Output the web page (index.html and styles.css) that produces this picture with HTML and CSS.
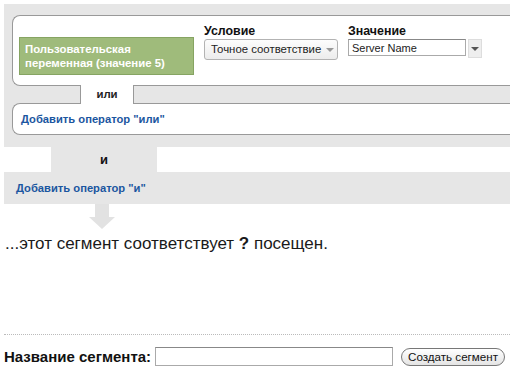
FILE: index.html
```html
<!DOCTYPE html>
<html>
<head>
<meta charset="utf-8">
<link rel="stylesheet" href="styles.css">
</head>
<body>

<div class="segment">
  <div class="or-group">
    <div class="box rule">
      <div class="dimension">Пользовательская переменная (значение 5)</div>
      <div class="field cond">
        <div class="field-label">Условие</div>
        <div class="select-btn">Точное соответствие <span class="caret"></span></div>
      </div>
      <div class="field value">
        <div class="field-label">Значение</div>
        <div class="value-row">
          <input class="value-input" type="text" value="Server Name">
          <span class="value-drop"><span class="caret dark"></span></span>
        </div>
      </div>
    </div>
    <div class="or-tab">или</div>
    <div class="box add-or">
      <a href="#" class="add-link">Добавить оператор "или"</a>
    </div>
  </div>

  <div class="and-tab">и</div>
  <div class="and-band">
    <a href="#" class="add-link">Добавить оператор "и"</a>
  </div>

  <div class="down-arrow">
    <svg width="30" height="26" viewBox="0 0 30 26">
      <rect x="7" y="0" width="14" height="13" fill="#e2e2e2"/>
      <polygon points="1,13 27,13 14,25" fill="#e2e2e2"/>
    </svg>
  </div>

  <p class="summary">...этот сегмент соответствует <b>?</b> посещен.</p>

  <div class="save-row">
    <label class="save-label">Название сегмента:</label>
    <input class="name-input" type="text">
    <button class="create-btn">Создать сегмент</button>
  </div>
</div>

</body>
</html>
```

FILE: styles.css
```css
html, body {
    margin: 0;
    overflow: hidden;
    background: #fff;
}

body {
    font-family: "Liberation Sans", Arial, sans-serif;
    color: #222;
}

.segment {
    margin-left: 4px;
    padding-top: 4px;
    width: 506px;
}

.or-group {
    background: #e6e6e6;
    padding: 11px 0 12px 8px;
}

.box {
    background: #fff;
    border: 1px solid #999;
    border-right: none;
    border-radius: 8px 0 0 8px;
    box-sizing: border-box;
}

.rule {
    display: flex;
    align-items: flex-start;
    height: 71px;
    padding-left: 6px;
}

.dimension {
    margin-top: 21px;
    width: 175px;
    height: 38px;
    box-sizing: border-box;
    background: #9fbb7b;
    border: 1px solid #86a462;
    color: #fff;
    font-size: 11.4px;
    font-weight: bold;
    line-height: 14px;
    padding: 4px 5px;
}

.field {
    padding-top: 8px;
}
.cond {margin-left: 10px;}
.value {margin-left: 10px;}

.field-label {
    font-size: 12.4px;
    font-weight: bold;
    line-height: 15px;
    color: #111;
}

.select-btn {
    width: 134px;
    height: 21px;
    box-sizing: border-box;
    border: 1px solid #b3b3b3;
    border-radius: 3px;
    background: linear-gradient(#fdfdfd, #ececec);
    font-size: 11.4px;
    line-height: 19px;
    padding-left: 6px;
    color: #222;
    white-space: nowrap;
}

.caret {
    display: inline-block;
    width: 0;
    height: 0;
    border-left: 4px solid transparent;
    border-right: 4px solid transparent;
    border-top: 4px solid #999;
    vertical-align: middle;
    margin-left: 2px;
}
.caret.dark {
    border-top-color: #555;
    margin: 0;
}

.value-row {
    display: flex;
    align-items: flex-start;
}

.value-input {
    width: 118px;
    height: 17px;
    box-sizing: border-box;
    margin: 0;
    border: 1px solid #aaa;
    border-top-color: #888;
    font-family: "Liberation Sans", Arial, sans-serif;
    font-size: 11px;
    padding: 0 3px;
    color: #222;
}

.value-drop {
    margin-left: 2px;
    width: 14px;
    height: 19px;
    box-sizing: border-box;
    border: 1px solid #ddd;
    background: #eee;
    display: flex;
    align-items: center;
    justify-content: center;
}

.or-tab {
    position: relative;
    z-index: 1;
    margin: -1px 0 -1px 68px;
    width: 54px;
    height: 19px;
    box-sizing: border-box;
    background: #fff;
    border-left: 1px solid #999;
    border-right: 1px solid #999;
    font-size: 11.4px;
    font-weight: bold;
    text-align: center;
    line-height: 19px;
}

.add-or {
    height: 32px;
    padding-left: 8px;
    display: flex;
    align-items: center;
}

.add-link {
    color: #1b56a0;
    font-size: 11.2px;
    font-weight: bold;
    text-decoration: none;
}

.and-tab {
    margin-left: 47px;
    width: 106px;
    height: 25px;
    background: #e6e6e6;
    font-size: 13px;
    font-weight: bold;
    text-align: center;
    line-height: 26px;
    color: #111;
}

.and-band {
    background: #e6e6e6;
    height: 32px;
    padding-left: 12px;
    display: flex;
    align-items: center;
}

.down-arrow {
    margin-left: 84px;
    height: 26px;
}
.down-arrow svg {display: block;}

.summary {
    margin: 4px 0 0 1px;
    font-size: 17px;
    line-height: 20px;
    color: #1a1a1a;
}

.save-row {
    margin-top: 80px;
    border-top: 1px dotted #bbb;
    padding-top: 12px;
    display: flex;
    align-items: center;
    white-space: nowrap;
}

.save-label {
    flex: none;
    font-size: 15px;
    font-weight: bold;
    color: #111;
}

.name-input {
    flex: 0 1 238px;
    min-width: 0;
    margin: 0 0 0 4px;
    height: 19px;
    box-sizing: border-box;
    border: 1px solid #aaa;
    border-top-color: #888;
}

.create-btn {
    flex: none;
    margin-left: 8px;
    height: 18px;
    padding: 0 6px;
    border: 1px solid #777;
    border-radius: 9px;
    background: linear-gradient(#fff, #e4e4e4);
    font-family: "Liberation Sans", Arial, sans-serif;
    font-size: 11.6px;
    color: #111;
}
```
